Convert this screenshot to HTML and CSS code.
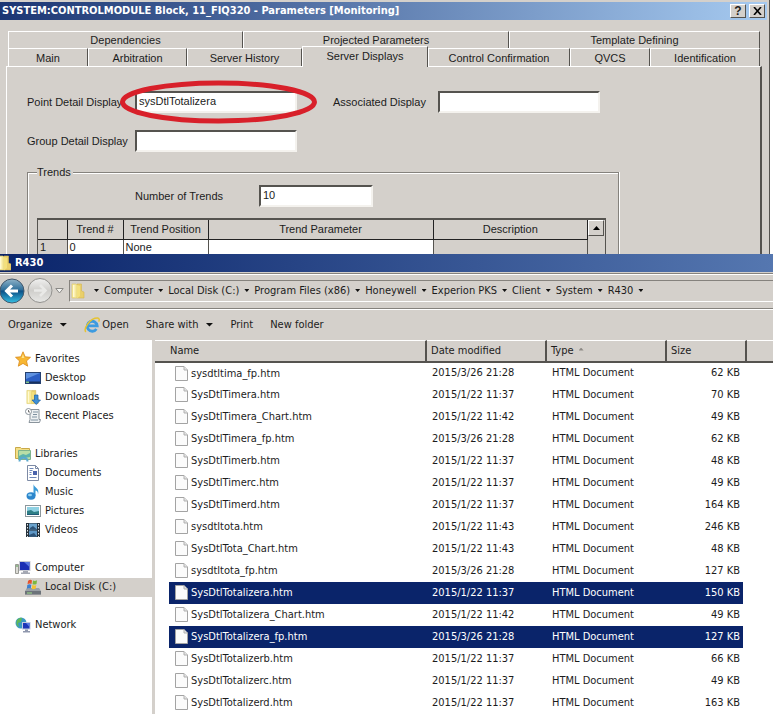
FILE: index.html
```html
<!DOCTYPE html>
<html lang="en">
<head>
    <meta charset="UTF-8">
    <meta name="viewport" content="width=device-width, initial-scale=1.0">
    <title>Parameters</title>
    <link rel="stylesheet" href="styles.css">
</head>
<body>
    <!-- shared icons -->
    <svg class="defs" width="0" height="0" aria-hidden="true">
        <symbol id="file" viewBox="0 0 13 15">
            <path d="M.5 .5h8.500l3.500 3.500v10.500h-12z" fill="#fbfbfb" stroke="#a3a3a3"/>
            <path d="M9 .5v3.500h3.500" fill="#e4e4e4" stroke="#b0b0b0"/>
        </symbol>
        <symbol id="folder" viewBox="0 0 16 16">
            <path d="M7 1h4.500v7l2.500 1v6H7z" fill="#e9cf6a" stroke="#d3b552" stroke-width=".6"/>
            <path d="M2 1h4l1 1v13H2z" fill="#f6e99a" stroke="#dcc765" stroke-width=".6"/>
            <path d="M7 2l3 1v10l-3 2.500z" fill="#f3e07c"/>
            <path d="M3 2h1.500v12H3z" fill="#fffad2"/>
        </symbol>
    </svg>

    <section class="dialog">
        <header class="dialog-title">
            <h1>SYSTEM:CONTROLMODULE Block, 11_FIQ320 - Parameters [Monitoring]</h1>
            <button type="button" class="caption-btn">?</button>
            <button type="button" class="caption-btn" aria-label="Close">
                <svg width="9" height="8" viewBox="0 0 9 8"><path d="M1 0l7 8M8 0L1 8" stroke="#000" stroke-width="1.600"/></svg>
            </button>
        </header>

        <div class="dialog-body">
            <div class="tabs tabs-back">
                <button type="button" class="tab">Dependencies</button>
                <button type="button" class="tab">Projected Parameters</button>
                <button type="button" class="tab">Template Defining</button>
            </div>
            <div class="tabs tabs-front">
                <button type="button" class="tab">Main</button>
                <button type="button" class="tab">Arbitration</button>
                <button type="button" class="tab">Server History</button>
                <button type="button" class="tab active">Server Displays</button>
                <button type="button" class="tab">Control Confirmation</button>
                <button type="button" class="tab">QVCS</button>
                <button type="button" class="tab">Identification</button>
            </div>

            <form class="panel">
                <div class="fields">
                    <label for="point">Point Detail Display</label>
                    <div class="marked">
                        <input type="text" id="point" value="sysDtlTotalizera">
                        <svg class="marker" viewBox="0 0 197 44"><ellipse cx="98.500" cy="22" rx="96" ry="19" fill="none" stroke="#d8202a" stroke-width="5"/></svg>
                    </div>
                    <label for="associated" class="second">Associated Display</label>
                    <input type="text" id="associated">
                    <label for="group">Group Detail Display</label>
                    <input type="text" id="group">
                </div>

                <fieldset class="trends">
                    <legend>Trends</legend>
                    <div class="trend-count">
                        <label for="count">Number of Trends</label>
                        <input type="text" id="count" value="10">
                    </div>
                    <div class="grid-box">
                        <table class="trend-table">
                            <colgroup><col class="t-row"><col class="t-num"><col class="t-pos"><col class="t-param"><col></colgroup>
                            <thead>
                                <tr><th></th><th>Trend #</th><th>Trend Position</th><th>Trend Parameter</th><th>Description</th></tr>
                            </thead>
                            <tbody>
                                <tr><td class="gray">1</td><td>0</td><td>None</td><td></td><td class="gray"></td></tr>
                            </tbody>
                        </table>
                        <div class="scrollbar">
                            <button type="button" aria-label="Scroll up">
                                <svg width="7" height="4" viewBox="0 0 7 4"><path d="M0 4L3.500 0L7 4z"/></svg>
                            </button>
                        </div>
                    </div>
                </fieldset>
            </form>
        </div>
    </section>

    <section class="explorer">
        <header class="explorer-title">
            <svg width="11" height="16" viewBox="3 0 11 16"><use href="#folder" width="16" height="16"/></svg>
            <h2>R430</h2>
        </header>

        <div class="address-row">
            <button type="button" class="nav-btn" aria-label="Back">
                <svg width="25" height="26" viewBox="0 0 25 26">
                    <defs>
                        <linearGradient id="blue" x2="0" y2="1">
                            <stop offset="0" stop-color="#8fb3c8"/><stop offset=".45" stop-color="#2f6f9a"/>
                            <stop offset=".5" stop-color="#0b4f86"/><stop offset="1" stop-color="#35c0e4"/>
                        </linearGradient>
                        <linearGradient id="silver" x2="0" y2="1">
                            <stop offset="0" stop-color="#f1f1f0"/><stop offset=".5" stop-color="#cfcecb"/><stop offset="1" stop-color="#e8e8e6"/>
                        </linearGradient>
                    </defs>
                    <circle cx="12" cy="13" r="12" fill="url(#blue)" stroke="#44586c"/>
                    <path d="M18 13H7M12 7.500L6.500 13l5.500 5.500" fill="none" stroke="#fff" stroke-width="3"/>
                </svg>
            </button>
            <button type="button" class="nav-btn" aria-label="Forward">
                <svg width="26" height="26" viewBox="0 0 26 26">
                    <circle cx="13" cy="12.500" r="12" fill="url(#silver)" stroke="#92918e"/>
                    <path d="M7 12.500h11M13 7l5.500 5.500L13 18" fill="none" stroke="#e9e9e7" stroke-width="2.500"/>
                </svg>
            </button>
            <button type="button" class="nav-btn recent" aria-label="Recent pages">
                <svg width="9" height="6" viewBox="0 0 9 6"><path d="M.8.500h7.400L4.500 5z" fill="#f4f4f2" stroke="#8a8986"/></svg>
            </button>
            <nav class="address">
                <svg width="16" height="18" viewBox="0 0 16 16"><use href="#folder"/></svg>
                <i class="arrow first"></i>
                <a href="#">Computer</a><i class="arrow"></i>
                <a href="#">Local Disk (C:)</a><i class="arrow"></i>
                <a href="#">Program Files (x86)</a><i class="arrow"></i>
                <a href="#">Honeywell</a><i class="arrow"></i>
                <a href="#">Experion PKS</a><i class="arrow"></i>
                <a href="#">Client</a><i class="arrow"></i>
                <a href="#">System</a><i class="arrow"></i>
                <a href="#">R430</a><i class="arrow"></i>
            </nav>
        </div>

        <div class="toolbar">
            <button type="button">Organize<i class="arrow big"></i></button>
            <button type="button" class="open">
                <svg width="16" height="16" viewBox="0 0 16 16">
                    <path d="M3.500 8.800h9.700a5 5 0 1 0-.8 3.200" fill="none" stroke="#3d9be0" stroke-width="2.800"/>
                    <path d="M1.800 15C-.8 11.500 6 1 13.500 1c2 0 2 1.800 1.200 3.600" fill="none" stroke="#e6c331" stroke-width="1.500"/>
                </svg>Open</button>
            <button type="button">Share with<i class="arrow big"></i></button>
            <button type="button">Print</button>
            <button type="button">New folder</button>
        </div>

        <div class="content">
            <nav class="sidebar">
                <ul>
                    <li><a href="#">
                        <svg width="16" height="16" viewBox="0 0 16 16"><path d="M8 .8l2.200 5 5.300.5-4 3.600 1.200 5.300L8 12.400l-4.700 2.800 1.200-5.300-4-3.600 5.300-.5z" fill="#f7b733" stroke="#d98a1c" stroke-width=".8"/><path d="M8 3l1.300 4H6.500z" fill="#ffe48a"/></svg>Favorites</a></li>
                    <li class="sub"><a href="#">
                        <svg width="16" height="16" viewBox="0 0 16 16"><rect x=".5" y="2.500" width="15" height="11" fill="#2c5fc4" stroke="#25406f"/><path d="M1 3h14L1 9z" fill="#5f92e0"/><path d="M1 11.500h14v1.500H1z" fill="#16305f"/><path d="M1 11.500h3v1.500H1z" fill="#7fc28b"/></svg>Desktop</a></li>
                    <li class="sub"><a href="#">
                        <svg width="16" height="16" viewBox="0 0 16 16"><use href="#folder" width="15" height="16"/><path d="M9.500 6h3.500v5h2.500l-4.250 4.500L7 11h2.500z" fill="#3d8fd6" stroke="#1d5fa3" stroke-width=".7"/></svg>Downloads</a></li>
                    <li class="sub"><a href="#">
                        <svg width="16" height="16" viewBox="0 0 16 16"><path d="M5 1.500h9v10h1.500l-1 3H4l1-3z" fill="#eef1f3" stroke="#8a949c"/><path d="M8 4h5M8 6.500h4M7 9h5M6 12h7" stroke="#7e91a0"/><circle cx="3.500" cy="3.500" r="3" fill="#fff" stroke="#8a949c"/><path d="M3.500 2v2H5" fill="none" stroke="#555" stroke-width=".8"/></svg>Recent Places</a></li>
                </ul>
                <ul>
                    <li><a href="#">
                        <svg width="16" height="16" viewBox="0 0 16 16"><path d="M.5 1.500h5l1 1h8v10H.5z" fill="#f3df86" stroke="#c9a94a"/><path d="M3.500 4.500h12v9h-12z" fill="#b9dea6" stroke="#7fb38c"/><path d="M4 10l4-2 3 1 4-2v4l-11 2z" fill="#5cb3ab"/><path d="M4.500 15.500c0-5 8-5 8 0" fill="none" stroke="#5aa9cf" stroke-width="2"/></svg>Libraries</a></li>
                    <li class="sub"><a href="#">
                        <svg width="16" height="16" viewBox="0 0 16 16"><path d="M2.500.5h8l3 3v12h-11z" fill="#fff" stroke="#7d8aa5"/><path d="M10.500.5v3h3" fill="none" stroke="#7d8aa5"/><path d="M4.500 3.500h4M4.500 5.500h3M4.500 7.500h2M4.500 9.500h2M4.500 12.500h7" stroke="#6d87b8"/><path d="M8 6h4v4H8z" fill="#4a63ab"/></svg>Documents</a></li>
                    <li class="sub"><a href="#">
                        <svg width="16" height="16" viewBox="0 0 16 16"><path d="M8.500 0c.5 3.500 6.500 4 4.500 10.500C13 7.500 12 6.500 10.500 6.500V12h-2z" fill="#3a9bd8"/><ellipse cx="6" cy="12" rx="4.500" ry="3.700" fill="#2c86cc"/><ellipse cx="5" cy="11" rx="2" ry="1.300" fill="#8fd0f2"/></svg>Music</a></li>
                    <li class="sub"><a href="#">
                        <svg width="16" height="16" viewBox="0 0 16 16"><rect x=".5" y="2.500" width="15" height="11" fill="#fff" stroke="#8c979c"/><rect x="2" y="4" width="12" height="8" fill="#8fd1e3"/><path d="M2 8l4-1 3 2 5-1v4H2z" fill="#2f7f86"/><path d="M2 11h12v1H2z" fill="#1f5a78"/></svg>Pictures</a></li>
                    <li class="sub"><a href="#">
                        <svg width="16" height="16" viewBox="0 0 16 16"><rect x="1" y="1" width="14" height="14" fill="#26313b"/><rect x="4" y="1.500" width="8" height="6" fill="#6aa2cc"/><rect x="4" y="8.500" width="8" height="6" fill="#5d96c5"/><path d="M5 6l3-2 4 3.500H5zM4 13l5-2 3 3.500H4z" fill="#2c5277"/><path d="M2.500 2v13M13.500 2v13" stroke="#dfe6ea" stroke-dasharray="1.500 1.500"/></svg>Videos</a></li>
                </ul>
                <ul>
                    <li><a href="#">
                        <svg width="16" height="16" viewBox="0 0 16 16"><path d="M.5 4.500h3v9h-3z" fill="#dcdcd6" stroke="#9a9a94"/><rect x="4" y="1" width="11.500" height="10" fill="#c9ccd4"/><rect x="5" y="2" width="9.500" height="8" fill="#1b2fb4"/><path d="M9 2h5.500v5z" fill="#5877e0"/><path d="M8 11h5v1.500H8zM6 12.500h9V14H6z" fill="#a4a8b3"/><path d="M1 6h2" stroke="#4c9b4c"/></svg>Computer</a></li>
                    <li class="sub current"><a href="#">
                        <svg width="16" height="16" viewBox="0 0 16 16"><path d="M2 9h12l2 3v3.500H0V12z" fill="#9aa0a6"/><path d="M0 12h16v3.500H0z" fill="#6c7379"/><path d="M2 14h5" stroke="#9fe08a"/><path d="M3 2q2-2 4-.6L6.500 5q-2-1-4 .3z" fill="#e5532d"/><path d="M8 1.600q2 1 4-.3L11.500 5q-2 1-4 .2z" fill="#7cb83e"/><path d="M2.300 6q2-1.200 4-.2L5.800 9.500q-2-1-4 .3z" fill="#3e80cf"/><path d="M7.300 6q2 1 4-.1l-.6 3.700q-2 1-3.900.1z" fill="#f3c232"/></svg>Local Disk (C:)</a></li>
                </ul>
                <ul>
                    <li><a href="#">
                        <svg width="16" height="16" viewBox="0 0 16 16"><circle cx="6" cy="6" r="5.500" fill="#3b9ac4"/><path d="M2 3q3-3 5-2L6 5 3 6l1 4q-4-2-2-7z" fill="#5fb85a"/><rect x="7" y="5" width="8.500" height="7.500" fill="#c3cbe0"/><rect x="8" y="6" width="6.500" height="5.500" fill="#1d36b8"/><path d="M11 6h3.500v4z" fill="#5a7ae4"/><path d="M10 12.500h3V14h2v1.500H8V14h2z" fill="#8f97ad"/></svg>Network</a></li>
                </ul>
            </nav>

            <div class="list">
                <table class="files">
                    <colgroup><col class="c-pad"><col class="c-name"><col class="c-date"><col class="c-type"><col class="c-size"><col class="c-gap"><col></colgroup>
                    <thead>
                        <tr><th colspan="2">Name</th><th>Date modified</th><th>Type<i class="sort"></i></th><th colspan="2">Size</th><th></th></tr>
                    </thead>
                    <tbody>
                        <tr><td></td><td><svg><use href="#file"/></svg>sysdtltima_fp.htm</td><td>2015/3/26 21:28</td><td>HTML Document</td><td>62 KB</td></tr>
                        <tr><td></td><td><svg><use href="#file"/></svg>SysDtlTimera.htm</td><td>2015/1/22 11:37</td><td>HTML Document</td><td>70 KB</td></tr>
                        <tr><td></td><td><svg><use href="#file"/></svg>SysDtlTimera_Chart.htm</td><td>2015/1/22 11:42</td><td>HTML Document</td><td>49 KB</td></tr>
                        <tr><td></td><td><svg><use href="#file"/></svg>SysDtlTimera_fp.htm</td><td>2015/3/26 21:28</td><td>HTML Document</td><td>62 KB</td></tr>
                        <tr><td></td><td><svg><use href="#file"/></svg>SysDtlTimerb.htm</td><td>2015/1/22 11:37</td><td>HTML Document</td><td>48 KB</td></tr>
                        <tr><td></td><td><svg><use href="#file"/></svg>SysDtlTimerc.htm</td><td>2015/1/22 11:37</td><td>HTML Document</td><td>49 KB</td></tr>
                        <tr><td></td><td><svg><use href="#file"/></svg>SysDtlTimerd.htm</td><td>2015/1/22 11:37</td><td>HTML Document</td><td>164 KB</td></tr>
                        <tr><td></td><td><svg><use href="#file"/></svg>sysdtltota.htm</td><td>2015/1/22 11:43</td><td>HTML Document</td><td>246 KB</td></tr>
                        <tr><td></td><td><svg><use href="#file"/></svg>SysDtlTota_Chart.htm</td><td>2015/1/22 11:43</td><td>HTML Document</td><td>48 KB</td></tr>
                        <tr><td></td><td><svg><use href="#file"/></svg>sysdtltota_fp.htm</td><td>2015/3/26 21:28</td><td>HTML Document</td><td>127 KB</td></tr>
                        <tr class="selected"><td></td><td><svg><use href="#file"/></svg>SysDtlTotalizera.htm</td><td>2015/1/22 11:37</td><td>HTML Document</td><td>150 KB</td></tr>
                        <tr><td></td><td><svg><use href="#file"/></svg>SysDtlTotalizera_Chart.htm</td><td>2015/1/22 11:42</td><td>HTML Document</td><td>49 KB</td></tr>
                        <tr class="selected"><td></td><td><svg><use href="#file"/></svg>SysDtlTotalizera_fp.htm</td><td>2015/3/26 21:28</td><td>HTML Document</td><td>127 KB</td></tr>
                        <tr><td></td><td><svg><use href="#file"/></svg>SysDtlTotalizerb.htm</td><td>2015/1/22 11:37</td><td>HTML Document</td><td>66 KB</td></tr>
                        <tr><td></td><td><svg><use href="#file"/></svg>SysDtlTotalizerc.htm</td><td>2015/1/22 11:37</td><td>HTML Document</td><td>49 KB</td></tr>
                        <tr><td></td><td><svg><use href="#file"/></svg>SysDtlTotalizerd.htm</td><td>2015/1/22 11:37</td><td>HTML Document</td><td>163 KB</td></tr>
                    </tbody>
                </table>
            </div>
        </div>
    </section>
</body>
</html>
```
FILE: styles.css
```css
* {
    margin: 0;
    padding: 0;
    box-sizing: border-box;
}

:root {
    --face: #d4d0cb;
    --dark: #55534f;
    --shadow: #85827d;
    --navy: #0a246a;
    --text: #1c1c1c;
    --form-font: "Liberation Sans", Arial, sans-serif;
    --ui-font: "DejaVu Sans Condensed", Tahoma, sans-serif;
}

body {
    background: #fff;
    color: var(--text);
    font-family: var(--ui-font);
    font-size: 11px;
    line-height: 14px;
}

button,
input {
    font: inherit;
    color: inherit;
}

button {
    border: none;
    background: none;
}

a {
    color: inherit;
    text-decoration: none;
}

ul {
    list-style: none;
}

.defs {
    position: absolute;
}

/* Parameters dialog */
.dialog {
    background: var(--face);
    font-family: var(--form-font);
    margin-right: 3px;
    padding: 2px 2px 0 0;
    border-right: 1px solid var(--dark);
}

.dialog-title {
    display: flex;
    align-items: center;
    gap: 3px;
    height: 18px;
    padding: 0 2px;
    background: linear-gradient(90deg, #1c3673, #a6caf0);
}

.dialog-title h1,
.explorer-title h2 {
    flex: 1;
    color: #fff;
    font-family: var(--ui-font);
    font-size: 11px;
    font-weight: bold;
}

.caption-btn {
    display: flex;
    align-items: center;
    justify-content: center;
    width: 16px;
    height: 14px;
    background: var(--face);
    border: 1px solid;
    border-color: #fff var(--dark) var(--dark) #fff;
    font-size: 12px;
    font-weight: bold;
}

.dialog-body {
    padding: 11px 5px 0 6px;
}

.tabs {
    display: grid;
    margin: 0 2px;
}

.tabs-back {
    grid-template-columns: 235fr 266fr 251fr;
}

.tabs-front {
    grid-template-columns: 80fr 99fr 115fr 126fr 142fr 80fr 110fr;
}

.tab {
    height: 18px;
    border-top: 1px solid #fff;
    border-left: 1px solid #fff;
    border-right: 1px solid var(--dark);
    white-space: nowrap;
}

.tabs-back .tab {
    height: 17px;
}

.tab.active {
    position: relative;
    height: 21px;
    margin: -2px 0 -1px;
    padding-bottom: 3px;
    background: var(--face);
}

.panel {
    padding: 24px 0 0 20px;
    border: 1px solid #fff;
    border-right: 2px solid var(--dark);
    border-bottom: none;
}

.fields {
    display: grid;
    grid-template-columns: 108px 162px 141px 162px;
    row-gap: 17px;
    align-items: center;
}

.fields .second {
    padding-left: 36px;
}

.panel input {
    display: block;
    width: 100%;
    height: 22px;
    padding: 0 2px 2px;
    background: #fff;
    border: 2px solid;
    border-color: var(--dark) #f4f2ee #f4f2ee var(--dark);
    outline: none;
}

.marked {
    position: relative;
}

.marker {
    position: absolute;
    left: -15px;
    top: -11px;
    width: 197px;
    height: 44px;
}

.trends {
    width: 592px;
    margin-top: 13px;
    padding: 6px 12px 0 9px;
    border: 1px solid var(--shadow);
    border-bottom: none;
    box-shadow: inset 1px 1px #fff, 1px 0 #fff;
}

.trends legend {
    padding: 0 2px 0 0;
    background: var(--face);
}

.trend-count {
    display: grid;
    grid-template-columns: 124px 114px;
    align-items: center;
    padding-left: 98px;
}

.grid-box {
    display: flex;
    margin-top: 11px;
    border: 1px solid var(--dark);
    border-top-width: 2px;
    border-bottom: none;
}

.trend-table {
    flex: 1;
    table-layout: fixed;
    border-collapse: collapse;
}

.t-row { width: 29px; }
.t-num { width: 56px; }
.t-pos { width: 85px; }
.t-param { width: 225px; }

.trend-table th {
    height: 19px;
    font-weight: normal;
    border-right: 1px solid #222;
    border-bottom: 1px solid #222;
}

.trend-table td {
    height: 14px;
    padding: 0 2px;
    background: #fff;
    border-right: 1px solid var(--dark);
}

.trend-table td.gray {
    background: var(--face);
}

.scrollbar {
    width: 17px;
}

.scrollbar button {
    display: flex;
    align-items: center;
    justify-content: center;
    width: 16px;
    height: 16px;
    border: 1px solid;
    border-color: #fff var(--dark) var(--dark) #fff;
}

/* Explorer window */
.explorer {
    background: var(--face);
}

.explorer-title {
    display: flex;
    align-items: center;
    gap: 4px;
    height: 18px;
    background: linear-gradient(90deg, var(--navy), #5577b0);
}

.address-row {
    display: flex;
    align-items: center;
    height: 36px;
    margin-top: 1px;
    border-top: 1px solid var(--shadow);
    border-bottom: 1px solid var(--shadow);
    box-shadow: inset 0 1px #fff;
}

.nav-btn {
    display: flex;
    margin-right: 2px;
}

.nav-btn.recent {
    margin-right: 5px;
}

.address {
    display: flex;
    flex: 1;
    align-items: center;
    height: 22px;
    border-top: 1px solid var(--shadow);
    border-left: 1px solid var(--shadow);
    border-bottom: 1px solid #fff;
    white-space: nowrap;
}

.arrow {
    width: 5px;
    height: 3px;
    margin: 0 5px;
    background: #111;
    clip-path: polygon(0 0, 100% 0, 50% 100%);
}

.arrow.first {
    margin-left: 8px;
}

.arrow.big {
    width: 8px;
    height: 4px;
    margin: 0 0 0 7px;
}

.toolbar {
    display: flex;
    align-items: center;
    gap: 17px;
    height: 31px;
    padding-left: 8px;
    border-top: 1px solid #fff;
}

.toolbar button {
    display: flex;
    align-items: center;
}

.toolbar .open svg {
    margin-right: 2px;
}

.content {
    display: flex;
}

.sidebar {
    width: 155px;
    padding-top: 10px;
    background: #fff;
    border-right: 3px solid var(--face);
}

.sidebar ul {
    margin-bottom: 19px;
}

.sidebar a {
    display: flex;
    align-items: center;
    gap: 4px;
    height: 19px;
    padding-left: 15px;
}

.sidebar .sub a {
    padding-left: 25px;
}

.sidebar .current {
    background: var(--face);
}

.list {
    flex: 1;
    background: #fff;
}

.files {
    width: 100%;
    table-layout: fixed;
    border-collapse: separate;
    border-spacing: 0;
}

.c-pad { width: 14px; }
.c-name { width: 258px; }
.c-date { width: 120px; }
.c-type { width: 120px; }
.c-size { width: 76px; }
.c-gap { width: 4px; }

.files th {
    height: 23px;
    padding-left: 4px;
    text-align: left;
    font-weight: normal;
    background: var(--face);
    border-top: 1px solid #fff;
    border-right: 2px solid var(--dark);
    border-bottom: 2px solid var(--dark);
}

.files th:first-child {
    padding-left: 15px;
}

.files th:last-child {
    border-right: none;
}

.sort {
    display: inline-block;
    width: 5px;
    height: 3px;
    margin: 0 0 3px 5px;
    background: #8d8a86;
    clip-path: polygon(50% 0, 100% 100%, 0 100%);
}

.files td {
    height: 22px;
    padding-left: 5px;
    white-space: nowrap;
}

.files tbody tr:first-child td {
    height: 21px;
}

.files td:nth-child(5) {
    padding: 0 3px 0 0;
    text-align: right;
}

.files td svg {
    width: 13px;
    height: 15px;
    margin: 0 3px 0 1px;
    vertical-align: middle;
}

.files .selected td:nth-child(n+2) {
    background: var(--navy);
    color: #fff;
}
```
